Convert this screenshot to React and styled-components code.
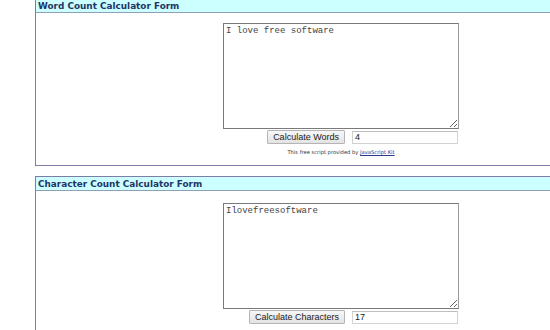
import React from "react";
import styled, { createGlobalStyle } from "styled-components";

const Global = createGlobalStyle`
  html, body { margin: 0; padding: 0; background: #fff; overflow: hidden; }
  body { width: 550px; height: 330px; }
`;

const Page = styled.div`
  display: flex;
  flex-direction: column;
  gap: 10px;
  padding-left: 35px;
  margin-top: -2px;
  width: 700px;
`;

const Panel = styled.section`
  width: 610px;
  border: 1px solid #7d7da8;
  background: #fff;
  display: flex;
  flex-direction: column;
`;

const Header = styled.div`
  height: 12px;
  padding-top: 1px;
  background: #ccffff;
  border-bottom: 1px solid #8f9fb8;
  color: #1f3566;
  font-family: "DejaVu Sans", Verdana, sans-serif;
  font-weight: bold;
  font-size: 8.9px;
  line-height: 12px;
  padding-left: 2px;
  white-space: nowrap;
`;

const Body = styled.div`
  display: flex;
  flex-direction: column;
  align-items: center;
  padding-top: ${(p) => p.$pt}px;
  min-height: ${(p) => p.$minH || 0}px;
`;

const Form = styled.div`
  width: 236px;
  display: flex;
  flex-direction: column;
  align-items: flex-end;
`;

const TextArea = styled.textarea`
  box-sizing: border-box;
  width: 236px;
  height: 106px;
  margin: 0;
  border: 1px solid #7a7a7a;
  border-right-color: #9a9a9a;
  padding: 2px 2px;
  font-family: "Liberation Mono", "Courier New", monospace;
  font-size: 9px;
  color: #444;
  background: #fff;
`;

const Row = styled.div`
  display: flex;
  align-items: center;
  gap: 7px;
  margin-top: 1px;
  margin-right: 1px;
`;

const Button = styled.button`
  box-sizing: border-box;
  height: 14px;
  padding: 0 5px;
  border: 1px solid #b5b5b5;
  border-radius: 1px;
  background: linear-gradient(#f7f7f7, #e3e3e3);
  font-family: "Liberation Sans", Arial, sans-serif;
  font-size: 9px;
  color: #222;
  line-height: 12px;
`;

const Output = styled.input`
  box-sizing: border-box;
  width: 106px;
  height: 13px;
  border: 1px solid #d2d2d2;
  border-top-color: #bdbdbd;
  padding: 0 2px;
  font-family: "Liberation Sans", Arial, sans-serif;
  font-size: 9px;
  color: #222;
`;

const Credit = styled.p`
  margin: 5px 0 0 0;
  font-family: "DejaVu Sans", Verdana, sans-serif;
  font-size: 5.2px;
  color: #333;
  height: 16px;
  a { color: #2a3a8a; text-decoration: underline; }
`;

export default function App() {
  return (
    <>
      <Global />
      <Page>
        <Panel>
          <Header>Word Count Calculator Form</Header>
          <Body $pt={10}>
            <Form>
              <TextArea defaultValue="I love free software" />
              <Row>
                <Button>Calculate Words</Button>
                <Output defaultValue="4" readOnly />
              </Row>
            </Form>
            <Credit>
              This free script provided by <a href="#">JavaScript Kit</a>
            </Credit>
          </Body>
        </Panel>
        <Panel>
          <Header>Character Count Calculator Form</Header>
          <Body $pt={12} $minH={200}>
            <Form>
              <TextArea defaultValue="Ilovefreesoftware" />
              <Row>
                <Button>Calculate Characters</Button>
                <Output defaultValue="17" readOnly />
              </Row>
            </Form>
          </Body>
        </Panel>
      </Page>
    </>
  );
}
